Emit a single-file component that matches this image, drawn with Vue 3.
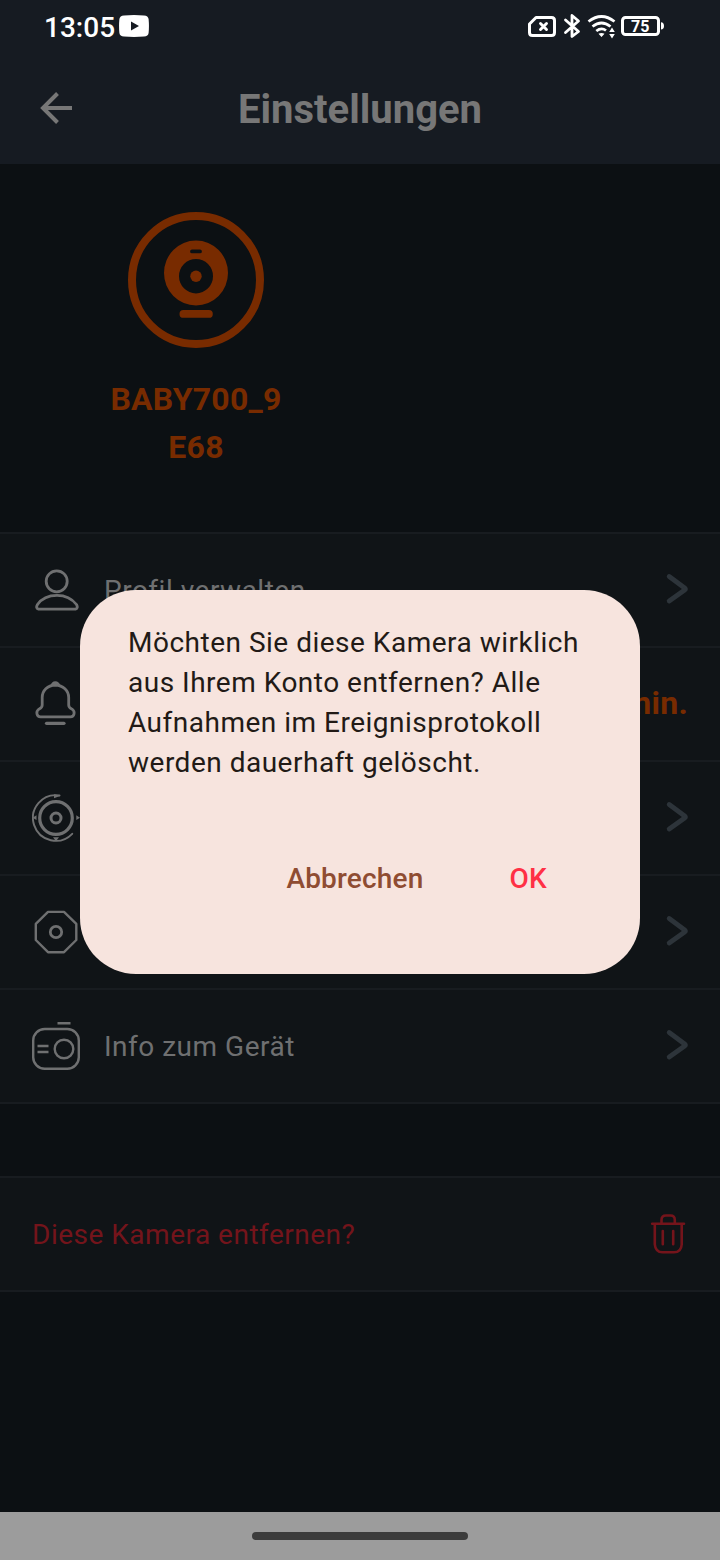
<script setup>
const rows = [
  { icon: 'profile', label: 'Profil verwalten' },
  { icon: 'bell', value: 'min.' },
  { icon: 'target' },
  { icon: 'octagon' },
  { icon: 'device', label: 'Info zum Gerät' },
]
</script>

<template>
  <div class="screen">
    <header class="top">
      <div class="status">
        <span class="time">13:05</span>
        <svg class="yt" width="30" height="22" viewBox="0 0 30 22"><path fill="#fff" fill-rule="evenodd" d="M5 .4Q15-.4 25 .4Q29.200 .7 29.600 4Q30.300 11 29.600 18Q29.200 21.300 25 21.600Q15 22.400 5 21.600Q.8 21.300 .4 18Q-.3 11 .4 4Q.8 .7 5 .4ZM12 6.500V15.500L20 11Z" /></svg>
        <svg class="sys" width="140" height="30" viewBox="526 12 140 30" fill="none" stroke="#fff" stroke-linecap="round" stroke-linejoin="round">
          <path stroke-width="3" d="M536 17.500H551.500Q554.500 17.500 554.500 20.500V32.500Q554.500 35.500 551.500 35.500H532.500Q529.500 35.500 529.500 32.500V24Z" />
          <path stroke-width="2.900" d="M540.500 23.500L546.500 29.500M546.500 23.500L540.500 29.500" />
          <path stroke-width="2.800" d="M565.500 20L578.500 31.500L572 36.500V15.500L578.500 21L565.500 32.500" />
          <path stroke-width="2.800" stroke-linecap="butt" d="M588.500 21.500Q601.500 11.500 614.500 21.500M592.500 26.500Q601.500 19.500 610.500 26.500M596.300 31Q601.500 27 606 30.500" />
          <path fill="#fff" stroke="none" d="M598.500 33.800Q601.500 32 604.500 33.800L601.500 37ZM609.200 32L612 27.500L614.800 32ZM609.200 34L612 38.500L614.800 34Z" />
          <rect x="622.500" y="17.500" width="36" height="17" rx="3" stroke-width="3" />
          <path stroke="none" fill="#fff" d="M661 22.200Q664 22.500 664 26Q664 29.200 661 29.500Z" />
          <text x="640.300" y="31.800" text-anchor="middle" class="battery">75</text>
        </svg>
      </div>
      <div class="bar">
        <svg width="34" height="34" viewBox="39 91 34 34" fill="none" stroke="#777" stroke-width="4"><path d="M72 108H43M57.500 93.500L43 108L57.500 122.500" /></svg>
        <h1>Einstellungen</h1>
      </div>
    </header>

    <section class="camera">
      <svg width="136" height="136" viewBox="128 212 136 136" fill="#782b00">
        <circle cx="196" cy="280" r="64" fill="none" stroke="#782b00" stroke-width="8" />
        <path fill-rule="evenodd" d="M164 273A32 32.500 0 1 1 228 273A32 32.500 0 1 1 164 273ZM179 276.200A17 17.200 0 1 0 213 276.200A17 17.200 0 1 0 179 276.200ZM192 249.500A1.900 1.900 0 0 0 192 253.300H200A1.900 1.900 0 0 0 200 249.500Z" />
        <circle cx="196" cy="276.300" r="5.700" />
        <rect x="179.500" y="310" width="33.300" height="7.800" rx="3.900" />
      </svg>
      <p>BABY700_9<br />E68</p>
    </section>

    <section class="list">
      <div v-for="r in rows" :key="r.icon" class="row">
        <svg class="icon" width="48" height="48" viewBox="0 0 48 48" fill="none" stroke="#6f7071" stroke-width="2.800" stroke-linejoin="round">
          <template v-if="r.icon === 'profile'">
            <circle cx="24.700" cy="15.300" r="10.500" />
            <path d="M6.500 43.200H43.500Q46.500 42.200 44.500 38.500C39.500 32 32 29.300 25 29.300S10 32 5.500 38.500Q3.300 42.200 6.500 43.200Z" />
          </template>
          <template v-else-if="r.icon === 'bell'">
            <path d="M23.300 5C15.500 5.300 10.200 10.500 10.200 17.500V25C10.200 28 8.500 28.200 6.500 29.500C3.800 31.600 4.500 36.800 8.500 36.800H38.500C42.500 36.800 43.200 31.600 40.500 29.500C38.500 28.200 36.700 28 36.700 25V17.500C36.700 10.500 31.100 5.300 23.300 5Z" />
            <path d="M18.500 5.800Q19.500 1.300 23.300 1.300T28.500 5.800Z" fill="#6f7071" stroke="none" />
            <path d="M14.500 43.300H32" stroke-width="3.200" stroke-linecap="round" />
          </template>
          <template v-else-if="r.icon === 'target'">
            <circle cx="24" cy="24" r="16.300" stroke-width="3.200" />
            <circle cx="24" cy="24" r="5" stroke-width="3" />
            <path stroke-width="1.900" stroke-linecap="round" d="M27.500 1.500A22.800 22.800 0 1 0 40.200 39.800" />
            <path fill="#6f7071" stroke="none" d="M22 .2L28.500 1.800L22 4.200ZM.5 23.700L4.500 21.300V26ZM21 43.200H27L24 47.200ZM44.300 21.300L48 23.700L44.300 26Z" />
          </template>
          <template v-else-if="r.icon === 'octagon'">
            <path stroke-width="2.400" d="M16 3.900H32L44.300 15.800V32L32 44.200H16L3.800 32V15.800Z" />
            <circle cx="24" cy="24" r="5.700" />
          </template>
          <template v-else>
            <rect x="1.200" y="7" width="45.600" height="39.800" rx="11.500" stroke-width="2.400" />
            <circle cx="32" cy="27" r="9.300" stroke-width="2.400" />
            <path stroke-width="2.400" d="M25.500 1.200H38.500M5.500 24H16.500M5.500 30H16.500" />
          </template>
        </svg>
        <span class="label">{{ r.label }}</span>
        <b v-if="r.value" class="value">{{ r.value }}</b>
        <svg v-else class="chevron" width="24" height="32" viewBox="0 0 24 32" fill="none" stroke="#2d343a" stroke-width="4.800" stroke-linecap="round" stroke-linejoin="round"><path d="M5.200 3.500L21 15.200Q21.900 16 21 16.700L5.200 28" /></svg>
      </div>
    </section>

    <section class="remove">
      <span>Diese Kamera entfernen?</span>
      <svg width="36" height="42" viewBox="650 1213 36 42" fill="none" stroke="#74141b" stroke-width="2.600" stroke-linecap="round" stroke-linejoin="round"><path d="M652.200 1223.800H684M654.800 1224.500V1244.500Q655.500 1252.300 662.500 1252.300H674Q681.200 1252.300 681.700 1244.500V1224.500M661.500 1222.500V1220Q661.500 1215.500 666 1215.500H670.500Q674.800 1215.500 674.800 1220V1222.500M662.800 1231V1244.300M673.200 1231V1244.300" /></svg>
    </section>

    <footer><i></i></footer>

    <div class="dialog" role="dialog">
      <p>Möchten Sie diese Kamera wirklich<br />aus Ihrem Konto entfernen? Alle<br />Aufnahmen im Ereignisprotokoll<br />werden dauerhaft gelöscht.</p>
      <div class="actions"><button>Abbrechen</button><button class="ok">OK</button></div>
    </div>
  </div>
</template>

<style>
body { margin: 0; background: #0c1013; }
</style>

<style scoped>
* { box-sizing: border-box; }
.screen { position: relative; display: flex; flex-direction: column; width: 720px; height: 1560px; overflow: hidden; background: #0c1013; font-family: Roboto, sans-serif; }
.top { height: 164px; background: #161b22; }
.status { display: flex; height: 52px; padding: 0 54px 0 44px; }
.time { width: 75px; color: #fff; font-size: 28px; font-weight: 500; line-height: 55px; }
.yt { margin-top: 15px; }
.sys { margin: 12px 0 0 auto; }
.battery { fill: #fff; stroke: none; font-size: 16px; font-weight: 700; }
.bar { display: flex; align-items: center; height: 112px; padding: 0 39px; }
h1 { flex: 1; margin: 0 34px 0 0; color: #777; font-size: 40px; font-weight: 700; line-height: 48px; text-align: center; padding-top: 4px; }
.camera { display: flex; flex-direction: column; align-items: center; width: 392px; height: 368px; padding-top: 48px; }
.camera p { margin: 27px 0 0; color: #782b00; font-size: 32px; font-weight: 700; line-height: 48px; letter-spacing: .25px; text-align: center; }
.list { border-top: 2px solid #181c20; background: #101417; }
.row { display: flex; align-items: center; height: 114px; padding: 0 32px; border-bottom: 2px solid #181c20; }
.label { flex: 1; margin-left: 24px; padding-top: 2px; color: #6f7071; font-size: 28px; letter-spacing: .5px; line-height: 40px; }
.value { padding-bottom: 2px; color: #782b00; font-size: 32px; letter-spacing: .25px; }
.chevron { margin-bottom: 2px; }
.remove { display: flex; align-items: center; justify-content: space-between; height: 116px; margin-top: 72px; padding: 0 34px 0 32px; border: solid #181c20; border-width: 2px 0; background: #101417; color: #74141b; font-size: 28px; letter-spacing: .5px; }
footer { display: flex; align-items: center; justify-content: center; height: 48px; margin-top: auto; background: #9c9c9c; }
footer i { width: 216px; height: 8px; border-radius: 4px; background: #3c3c3c; }
.dialog { position: absolute; left: 80px; top: 590px; width: 560px; height: 384px; padding: 33px 48px; border-radius: 56px; background: #f7e4de; }
.dialog p { margin: 0; color: #221a16; font-size: 28px; line-height: 40px; letter-spacing: .5px; white-space: nowrap; }
.actions { display: flex; justify-content: flex-end; gap: 86px; margin-top: 76px; padding-right: 45px; }
button { padding: 0; border: 0; background: none; color: #8f4c32; font: 500 28px/40px Roboto, sans-serif; letter-spacing: .2px; }
.ok { color: #ff3045; }
</style>
